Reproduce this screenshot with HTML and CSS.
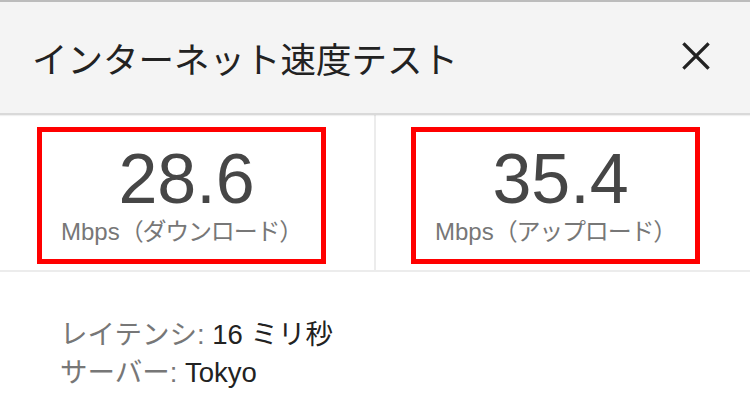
FILE: index.html
```html
<!DOCTYPE html>
<html lang="ja">
<head>
<meta charset="utf-8">
<title>インターネット速度テスト</title>
<link rel="stylesheet" href="styles.css">
</head>
<body>
<div class="page">
  <header class="header">
    <h1 class="title">インターネット速度テスト</h1>
    <svg class="close" width="28" height="28" viewBox="0 0 28 28" aria-label="閉じる">
      <path d="M2.5 2.5 L25.5 25.5 M25.5 2.5 L2.5 25.5" stroke="#222" stroke-width="3.2" stroke-linecap="square" fill="none"/>
    </svg>
  </header>
  <section class="results">
    <div class="panel panel-left">
      <div class="box">
        <div class="num">28.6</div>
        <div class="unit">Mbps<span class="jp">（ダウンロード）</span></div>
      </div>
    </div>
    <div class="divider"></div>
    <div class="panel panel-right">
      <div class="box">
        <div class="num">35.4</div>
        <div class="unit">Mbps<span class="jp">（アップロード）</span></div>
      </div>
    </div>
  </section>
  <section class="info">
    <div class="row"><span class="label">レイテンシ:</span> <span class="value">16 ミリ秒</span></div>
    <div class="row"><span class="label">サーバー:</span> <span class="value">Tokyo</span></div>
  </section>
</div>
</body>
</html>
```

FILE: styles.css
```css
html, body {
  margin: 0;
  padding: 0;
  background: #fff;
}
body {
  font-family: "Liberation Sans", "Noto Sans CJK JP", sans-serif;
  width: 750px;
  height: 409px;
  overflow: hidden;
}
.page {
  width: 750px;
}
.header {
  box-sizing: border-box;
  height: 115px;
  border-top: 2px solid #bcbcbc;
  border-bottom: 2px solid #d9d9d9;
  background: #f4f4f4;
  display: flex;
  align-items: center;
  justify-content: space-between;
  padding: 0 40px 0 32px;
  box-shadow: 0 1px 1px rgba(0,0,0,0.06);
  position: relative;
}
.title {
  margin: 0;
  font-family: "Noto Sans CJK JP", sans-serif;
  font-weight: 400;
  font-size: 35.5px;
  line-height: 1;
  color: #222;
}
.close {
  display: block;
  margin-bottom: 4px;
}
.results {
  display: flex;
  height: 155px;
  border-bottom: 2px solid #ececec;
}
.panel {
  flex: 0 0 374px;
  box-sizing: border-box;
  padding-top: 12px;
}
.panel-left { padding-left: 37px; }
.panel-right { padding-left: 35px; }
.divider {
  flex: 0 0 2px;
  background: #ececec;
}
.box {
  box-sizing: border-box;
  width: 289px;
  height: 137px;
  border: 5px solid #ff0000;
  padding-top: 12px;
  text-align: center;
}
.num {
  font-size: 70px;
  line-height: 70px;
  color: #464646;
  padding-left: 10px;
}
.unit {
  margin-top: 6px;
  font-size: 24px;
  line-height: 24px;
  color: #777;
  white-space: nowrap;
}
.jp {
  letter-spacing: -1.2px;
}
.info {
  padding: 44px 0 0 60px;
}
.row {
  font-size: 27.5px;
  line-height: 38px;
  white-space: nowrap;
}
.label { color: #777; }
.value { color: #222; }
```
